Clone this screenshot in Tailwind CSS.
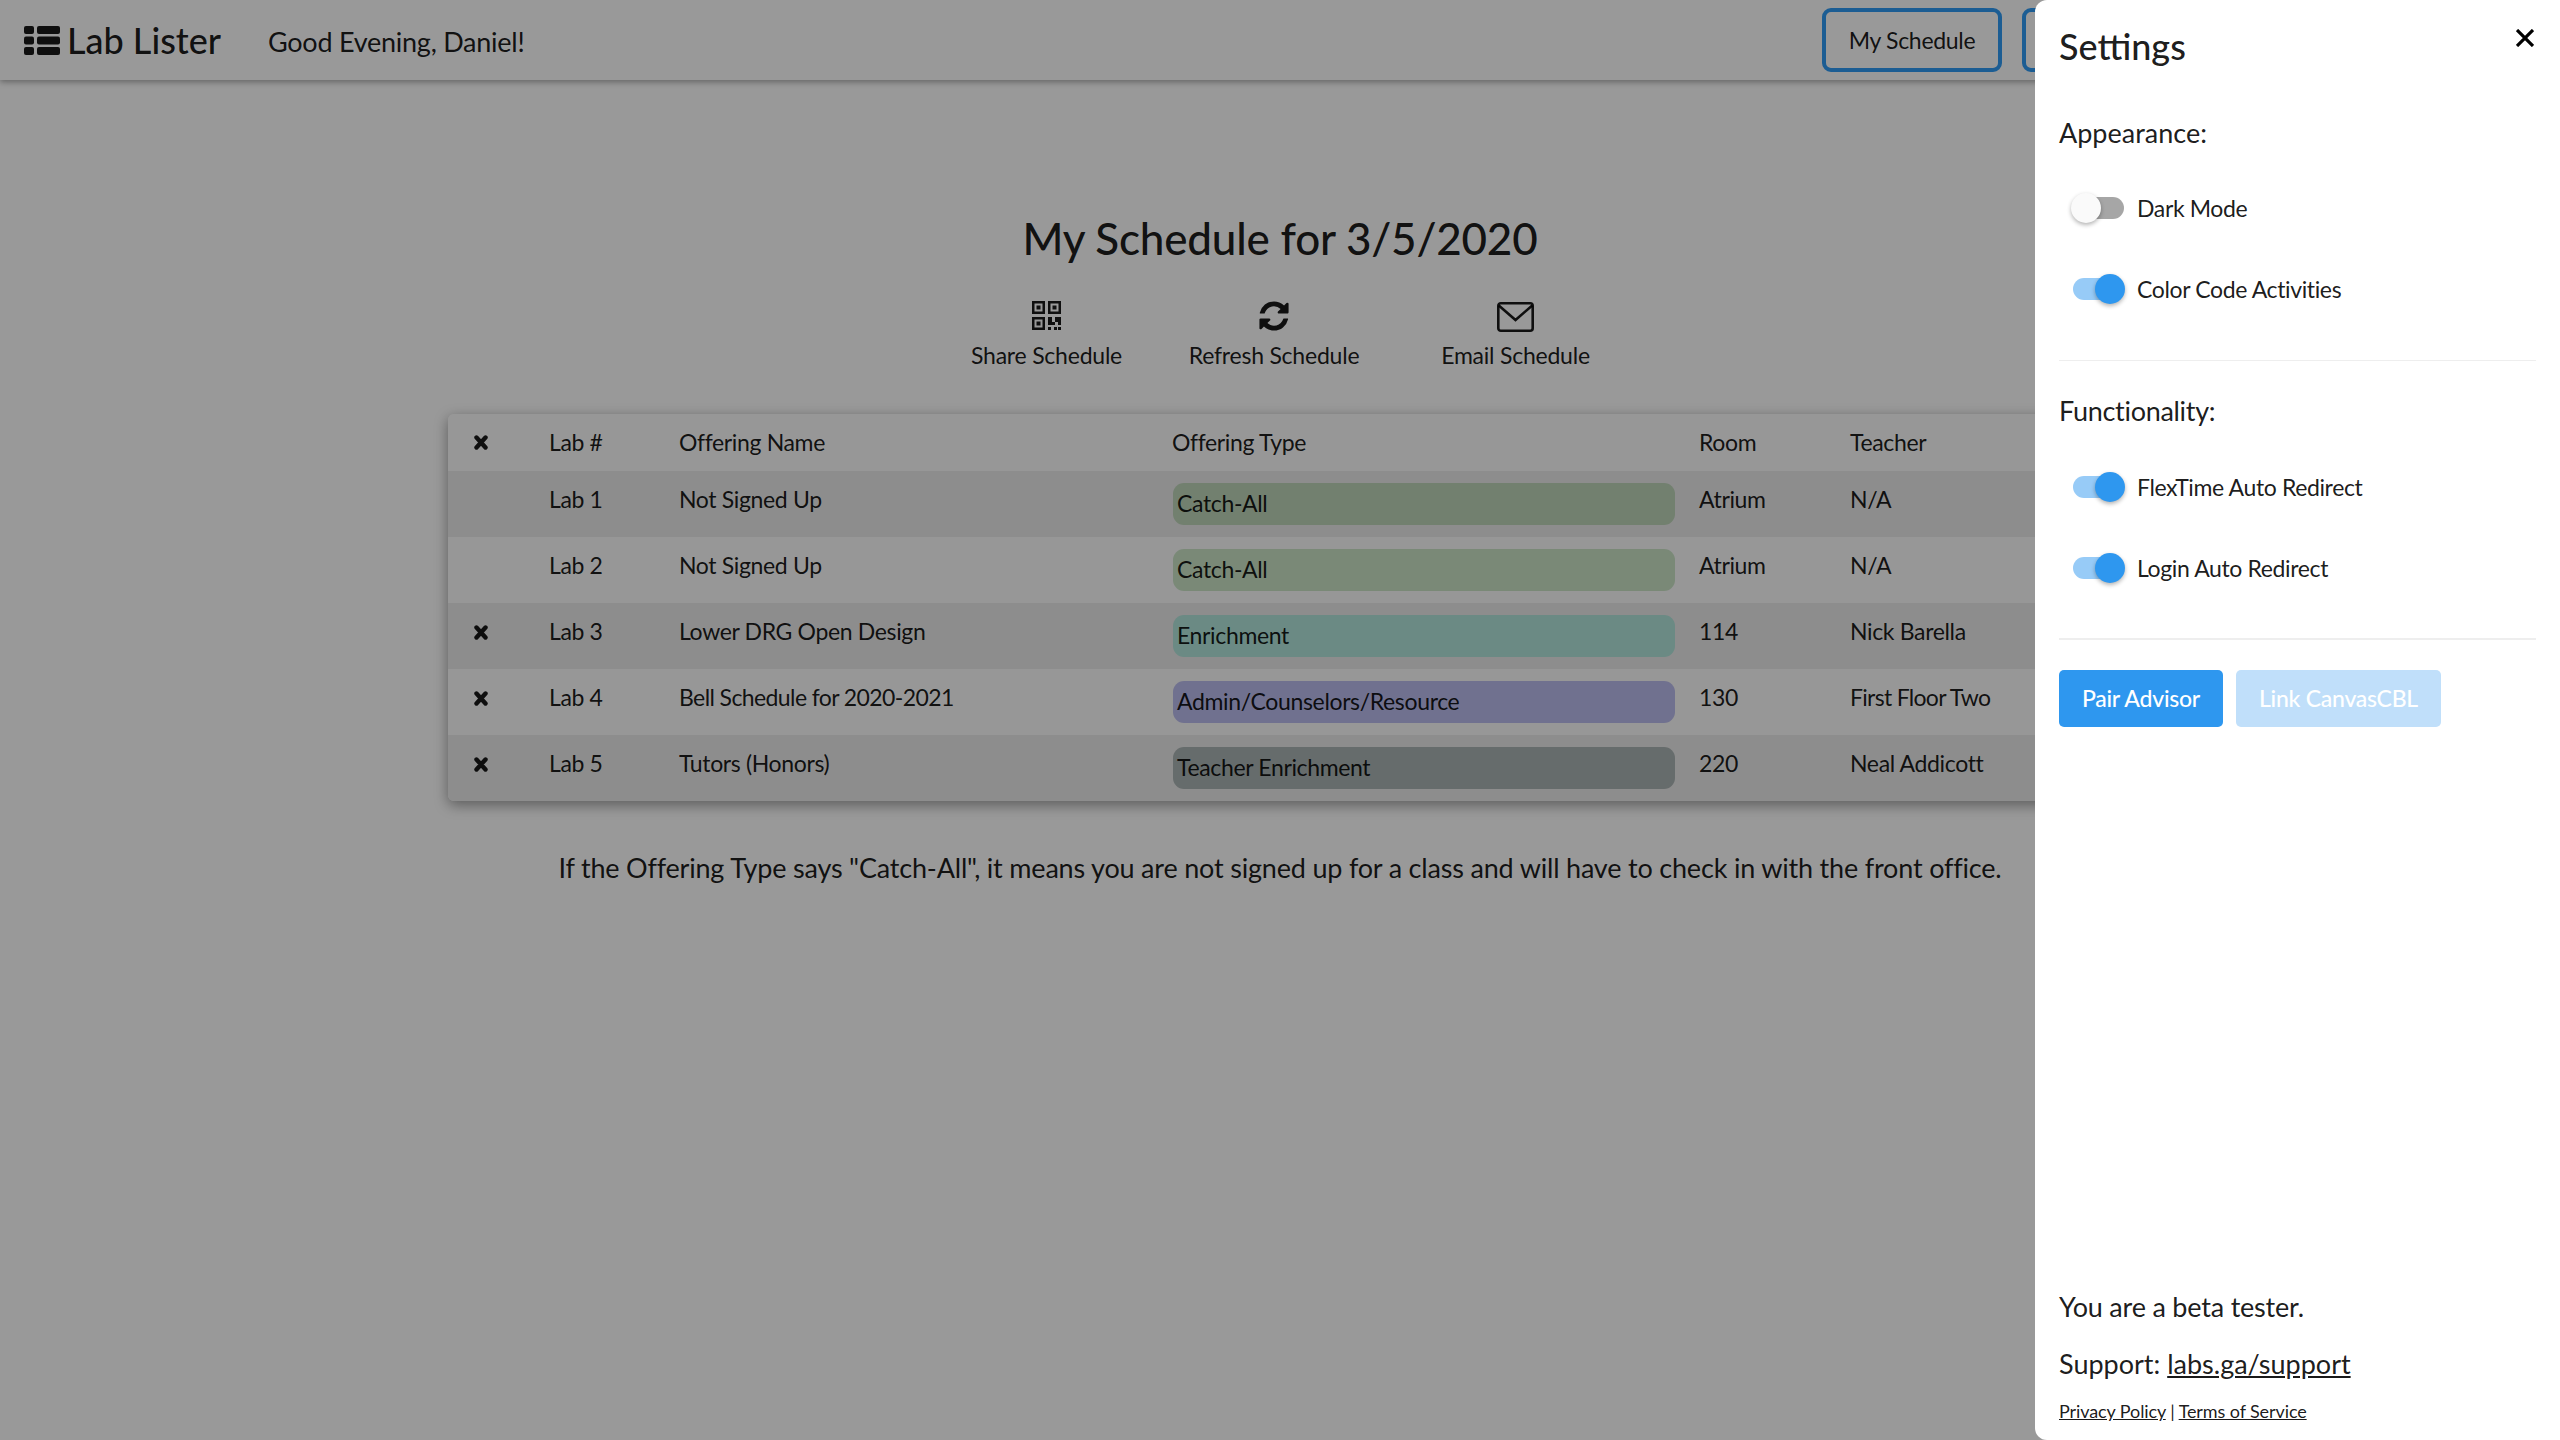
<!doctype html>
<html lang="en">
<head>
<meta charset="utf-8">
<title>Lab Lister</title>
<script src="https://cdn.jsdelivr.net/npm/@tailwindcss/browser@4"></script>
</head>
<body class="font-['Lato','Liberation_Sans',sans-serif] text-black/90 bg-white">
<div class="relative h-screen w-screen overflow-hidden bg-white">

  <!-- navbar -->
  <nav class="flex h-[80px] items-center bg-white pl-[24px] shadow-[0_2px_6px_rgba(0,0,0,0.35)]">
    <svg class="w-[36px] h-[29px]" viewBox="0 0 36 29" fill="currentColor">
      <rect x="0" y="0" width="10" height="8" rx="2"/><rect x="13" y="0" width="23" height="8" rx="2"/>
      <rect x="0" y="10.500" width="10" height="8" rx="2"/><rect x="13" y="10.500" width="23" height="8" rx="2"/>
      <rect x="0" y="21" width="10" height="8" rx="2"/><rect x="13" y="21" width="23" height="8" rx="2"/>
    </svg>
    <span class="ml-[7px] text-[36px] leading-[44px] font-medium">Lab Lister</span>
    <span class="ml-[47px] mt-[3px] text-[27px] leading-[36px] tracking-[-0.25px]">Good Evening, Daniel!</span>
    <div class="ml-auto flex gap-[20px]">
      <button class="w-[180px] h-[64px] rounded-[9px] border-[4px] border-[#2f9bf5] text-[23px] tracking-[-0.3px]">My Schedule</button>
      <button class="w-[180px] h-[64px] rounded-[9px] border-[4px] border-[#2f9bf5] text-[23px] mr-[358px]"></button>
    </div>
  </nav>

  <!-- schedule -->
  <main class="flex flex-col items-center">
    <h1 class="mt-[130px] text-[44px] leading-[56px] font-medium tracking-[-0.2px]">My Schedule for 3/5/2020</h1>

    <div class="mt-[35px] flex text-[23px] leading-[30px] tracking-[-0.22px]">
      <a class="flex w-[149px] flex-col items-center">
        <svg class="h-[29px] w-[29px]" viewBox="0 0 29 29" fill="currentColor">
          <path fill-rule="evenodd" d="M0 0h13v13H0zM2.500 2.500v8h8v-8zM16 0h13v13H16zM18.500 2.500v8h8v-8zM0 16h13v13H0zM2.500 18.500v8h8v-8z"/>
          <rect x="4.500" y="4.500" width="4" height="4"/><rect x="20.500" y="4.500" width="4" height="4"/><rect x="4.500" y="20.500" width="4" height="4"/>
          <path d="M16 16h4v5h3v-5h6v8h-3v-3h-3v3h-7z"/>
          <rect x="16" y="26" width="3" height="3"/><rect x="22" y="26" width="3" height="3"/><rect x="26" y="26" width="3" height="3"/>
        </svg>
        <span class="mt-[10px] whitespace-nowrap">Share Schedule</span>
      </a>
      <a class="ml-[69px] flex w-[168px] flex-col items-center">
        <svg class="h-[34px] w-[34px] -mt-[2px] -mb-[3px]" viewBox="0 0 1792 1792" fill="currentColor">
          <path d="M1639 1056q0 5-1 7-64 268-268 434.5t-478 166.5q-146 0-282.5-55t-243.500-157l-129 129q-19 19-45 19t-45-19-19-45v-448q0-26 19-45t45-19h448q26 0 45 19t19 45-19 45l-137 137q71 66 161 102t187 36q134 0 250-65t186-179q11-17 53-117 8-23 30-23h192q13 0 22.500 9.500t9.500 22.500zm25-800v448q0 26-19 45t-45 19h-448q-26 0-45-19t-19-45 19-45l138-138q-148-137-349-137-134 0-250 65t-186 179q-11 17-53 117-8 23-30 23h-199q-13 0-22.500-9.500t-9.500-22.500v-7q65-268 270-434.500t480-166.500q146 0 284 55.500t245 156.500l130-129q19-19 45-19t45 19 19 45z"/>
        </svg>
        <span class="mt-[10px] whitespace-nowrap">Refresh Schedule</span>
      </a>
      <a class="ml-[85px] flex w-[145px] flex-col items-center">
        <svg class="h-[30px] w-[37px] mt-[1px] -mb-[2px]" viewBox="0 0 37 30" fill="none" stroke="currentColor" stroke-width="2.600">
          <rect x="1.300" y="1.300" width="34.400" height="27.400" rx="2.500"/>
          <path d="M1.800 3.500 18.500 18 35.200 3.500"/>
        </svg>
        <span class="mt-[10px] whitespace-nowrap">Email Schedule</span>
      </a>
    </div>

    <section class="mt-[44px] w-[1664px] overflow-hidden rounded-[6px] bg-white text-[23px] leading-[30px] tracking-[-0.35px] shadow-[0_4px_14px_rgba(0,0,0,0.4)]">
      <div class="grid h-[57px] grid-cols-[101px_130px_493px_527px_151px_1fr] items-center bg-[#fcfcfc]">
        <svg class="ml-[26px] h-[15px] w-[14px]" viewBox="0 0 14 15" fill="none" stroke="currentColor" stroke-width="4.400" stroke-linecap="round"><path d="M2.500 2.500 11.500 12.500M11.500 2.500 2.500 12.500"/></svg>
        <span class="-mt-[1px]">Lab #</span><span class="-mt-[1px]">Offering Name</span><span class="-mt-[1px]">Offering Type</span><span class="-mt-[1px]">Room</span><span class="-mt-[1px]">Teacher</span>
      </div>

      <div class="grid h-[66px] grid-cols-[101px_130px_493px_527px_151px_1fr] items-center bg-[#ebebeb]">
        <span></span>
        <span class="-mt-[10px]">Lab 1</span><span class="-mt-[10px]">Not Signed Up</span>
        <span class="ml-[1px] flex h-[42px] w-[502px] items-center rounded-[11px] bg-[#bed5b9] pb-[2px] pl-[4px]">Catch-All</span>
        <span class="-mt-[10px]">Atrium</span><span class="-mt-[10px]">N/A</span>
      </div>

      <div class="grid h-[66px] grid-cols-[101px_130px_493px_527px_151px_1fr] items-center bg-[#fcfcfc]">
        <span></span>
        <span class="-mt-[10px]">Lab 2</span><span class="-mt-[10px]">Not Signed Up</span>
        <span class="ml-[1px] flex h-[42px] w-[502px] items-center rounded-[11px] bg-[#cbe5c7] pb-[2px] pl-[4px]">Catch-All</span>
        <span class="-mt-[10px]">Atrium</span><span class="-mt-[10px]">N/A</span>
      </div>

      <div class="grid h-[66px] grid-cols-[101px_130px_493px_527px_151px_1fr] items-center bg-[#ebebeb]">
        <svg class="ml-[26px] -mt-[8px] h-[15px] w-[14px]" viewBox="0 0 14 15" fill="none" stroke="currentColor" stroke-width="4.400" stroke-linecap="round"><path d="M2.500 2.500 11.500 12.500M11.500 2.500 2.500 12.500"/></svg>
        <span class="-mt-[10px]">Lab 3</span><span class="-mt-[10px]">Lower DRG Open Design</span>
        <span class="ml-[1px] flex h-[42px] w-[502px] items-center rounded-[11px] bg-[#b2e6dc] pb-[2px] pl-[4px]">Enrichment</span>
        <span class="-mt-[10px]">114</span><span class="-mt-[10px]">Nick Barella</span>
      </div>

      <div class="grid h-[66px] grid-cols-[101px_130px_493px_527px_151px_1fr] items-center bg-[#fcfcfc]">
        <svg class="ml-[26px] -mt-[8px] h-[15px] w-[14px]" viewBox="0 0 14 15" fill="none" stroke="currentColor" stroke-width="4.400" stroke-linecap="round"><path d="M2.500 2.500 11.500 12.500M11.500 2.500 2.500 12.500"/></svg>
        <span class="-mt-[10px]">Lab 4</span><span class="-mt-[10px] tracking-[-0.6px]">Bell Schedule for 2020-2021</span>
        <span class="ml-[1px] flex h-[42px] w-[502px] items-center rounded-[11px] bg-[#bbbdee] pb-[2px] pl-[4px]">Admin/Counselors/Resource</span>
        <span class="-mt-[10px]">130</span><span class="-mt-[10px] tracking-[-0.7px]">First Floor Two</span>
      </div>

      <div class="grid h-[66px] grid-cols-[101px_130px_493px_527px_151px_1fr] items-center bg-[#ebebeb]">
        <svg class="ml-[26px] -mt-[8px] h-[15px] w-[14px]" viewBox="0 0 14 15" fill="none" stroke="currentColor" stroke-width="4.400" stroke-linecap="round"><path d="M2.500 2.500 11.500 12.500M11.500 2.500 2.500 12.500"/></svg>
        <span class="-mt-[10px]">Lab 5</span><span class="-mt-[10px]">Tutors (Honors)</span>
        <span class="ml-[1px] flex h-[42px] w-[502px] items-center rounded-[11px] bg-[#abb4b4] pb-[2px] pl-[4px]">Teacher Enrichment</span>
        <span class="-mt-[10px]">220</span><span class="-mt-[10px]">Neal Addicott</span>
      </div>
    </section>

    <p class="mt-[49px] text-[27px] leading-[36px] tracking-[-0.19px]">If the Offering Type says "Catch-All", it means you are not signed up for a class and will have to check in with the front office.</p>
  </main>

  <!-- scrim -->
  <div class="absolute inset-0 bg-black/40"></div>

  <!-- settings drawer -->
  <aside class="absolute right-0 top-0 flex h-full w-[525px] flex-col rounded-l-[12px] bg-white pl-[24px] pr-[24px] text-black/90">
    <div class="flex items-start justify-between">
      <h2 class="mt-[24px] text-[36px] leading-[44px] font-medium">Settings</h2>
      <svg class="mt-[29px] mr-[2px] h-[18px] w-[18px]" viewBox="0 0 18 18" fill="none" stroke="black" stroke-width="3.200"><path d="M1 1 17 17M17 1 1 17"/></svg>
    </div>

    <h3 class="mt-[49px] text-[27px] leading-[32px]">Appearance:</h3>
    <div class="mt-[44px] flex items-center">
      <span class="relative ml-[12px] h-[30px] w-[54px]">
        <span class="absolute left-[2px] right-[1px] top-[4px] h-[22px] rounded-full bg-black/35"></span>
        <span class="absolute left-0 top-0 h-[30px] w-[30px] rounded-full bg-[#fafafa] shadow-[0_2px_4px_rgba(0,0,0,0.3)]"></span>
      </span>
      <span class="ml-[12px] text-[23px] leading-[30px] tracking-[-0.37px]">Dark Mode</span>
    </div>
    <div class="mt-[51px] flex items-center">
      <span class="relative ml-[12px] h-[30px] w-[54px]">
        <span class="absolute left-[2px] right-[1px] top-[4px] h-[22px] rounded-full bg-[#97cbf7]"></span>
        <span class="absolute right-0 top-0 h-[30px] w-[30px] rounded-full bg-[#2e97ef] shadow-[0_2px_4px_rgba(0,0,0,0.3)]"></span>
      </span>
      <span class="ml-[12px] text-[23px] leading-[30px] tracking-[-0.37px]">Color Code Activities</span>
    </div>
    <hr class="mt-[56px] border-t border-[#eeeeee]">

    <h3 class="mt-[34px] text-[27px] leading-[32px] tracking-[-0.3px]">Functionality:</h3>
    <div class="mt-[45px] flex items-center">
      <span class="relative ml-[12px] h-[30px] w-[54px]">
        <span class="absolute left-[2px] right-[1px] top-[4px] h-[22px] rounded-full bg-[#97cbf7]"></span>
        <span class="absolute right-0 top-0 h-[30px] w-[30px] rounded-full bg-[#2e97ef] shadow-[0_2px_4px_rgba(0,0,0,0.3)]"></span>
      </span>
      <span class="ml-[12px] text-[23px] leading-[30px] tracking-[-0.37px]">FlexTime Auto Redirect</span>
    </div>
    <div class="mt-[51px] flex items-center">
      <span class="relative ml-[12px] h-[30px] w-[54px]">
        <span class="absolute left-[2px] right-[1px] top-[4px] h-[22px] rounded-full bg-[#97cbf7]"></span>
        <span class="absolute right-0 top-0 h-[30px] w-[30px] rounded-full bg-[#2e97ef] shadow-[0_2px_4px_rgba(0,0,0,0.3)]"></span>
      </span>
      <span class="ml-[12px] text-[23px] leading-[30px] tracking-[-0.37px]">Login Auto Redirect</span>
    </div>
    <hr class="mt-[55px] border-t-2 border-[#eeeeee]">

    <div class="mt-[30px] flex gap-[13px] text-[23px] tracking-[-0.25px]">
      <button class="h-[57px] w-[164px] rounded-[5px] bg-[#2e97ef] text-white font-medium">Pair Advisor</button>
      <button class="h-[57px] w-[205px] rounded-[5px] bg-[#c0dffa] text-white font-medium">Link CanvasCBL</button>
    </div>

    <p class="mt-auto text-[27px] leading-[36px] tracking-[-0.2px]">You are a beta tester.</p>
    <p class="mt-[21px] text-[27px] leading-[36px]">Support: <a class="underline">labs.ga/support</a></p>
    <p class="mt-[17px] mb-[17px] text-[18px] leading-[24px] tracking-[-0.1px]"><a class="underline">Privacy Policy</a> | <a class="underline">Terms of Service</a></p>
  </aside>
</div>
</body>
</html>
